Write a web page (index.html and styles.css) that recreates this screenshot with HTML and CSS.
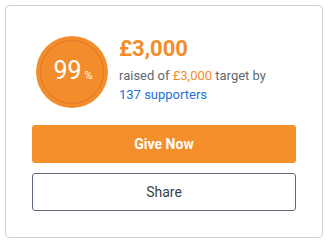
FILE: index.html
```html
<!DOCTYPE html>
<html>
<head>
<meta charset="utf-8">
<link rel="stylesheet" href="styles.css">
</head>
<body>
<div class="card">
  <div class="summary">
    <div class="badge">
      <div class="ring"><span class="pct">99</span><span class="pct-sign">%</span></div>
    </div>
    <div class="info">
      <div class="amount">£3,000</div>
      <p class="desc">raised of <span class="target">£3,000</span> target by <a class="supporters" href="#">137 supporters</a></p>
    </div>
  </div>
  <button class="btn btn-give">Give Now</button>
  <button class="btn btn-share">Share</button>
</div>
</body>
</html>
```

FILE: styles.css
```css
* { box-sizing: border-box; }
html, body { margin: 0; padding: 0; background: #fff; }
body {
  padding: 5px 0 0 5px;
  font-family: Roboto, "Liberation Sans", sans-serif;
}
.card {
  width: 318px;
  height: 233px;
  border: 1px solid #cfcfcf;
  border-radius: 4px;
  padding: 30px 25px 0 26px;
  display: flex;
  flex-direction: column;
}
.summary {
  display: flex;
  align-items: flex-start;
  gap: 11px;
  padding-left: 4px;
}
.badge {
  width: 72px;
  height: 72px;
  flex: none;
  border-radius: 50%;
  background: #f38d2c;
  display: flex;
  padding: 4px;
}
.ring {
  flex: 1;
  border: 1.5px solid #d97a25;
  border-radius: 50%;
  display: flex;
  align-items: baseline;
  justify-content: center;
  padding-top: 16px;
  padding-left: 2px;
  color: #fff;
}
.pct { font-size: 25px; line-height: 28px; }
.pct-sign { font-size: 11px; margin-left: 3px; }
.info { width: 170px; }
.amount {
  font-size: 22px;
  font-weight: 700;
  line-height: 26px;
  color: #f38d2c;
  margin-bottom: 4px;
}
.desc {
  margin: 0;
  width: 160px;
  font-size: 13px;
  line-height: 19px;
  color: #5f6775;
}
.target { color: #f38d2c; }
.supporters { color: #1f6fd8; text-decoration: none; }
.btn {
  width: 264px;
  height: 38px;
  border-radius: 3px;
  font-family: Roboto, "Liberation Sans", sans-serif;
  font-size: 14px;
  padding: 0;
}
.btn-give {
  margin-top: 17px;
  background: #f48f2c;
  border: none;
  color: #fff;
  font-weight: 700;
}
.btn-share {
  margin-top: 10px;
  background: #fff;
  border: 1px solid #5f6b7a;
  color: #3b3f46;
}
```
